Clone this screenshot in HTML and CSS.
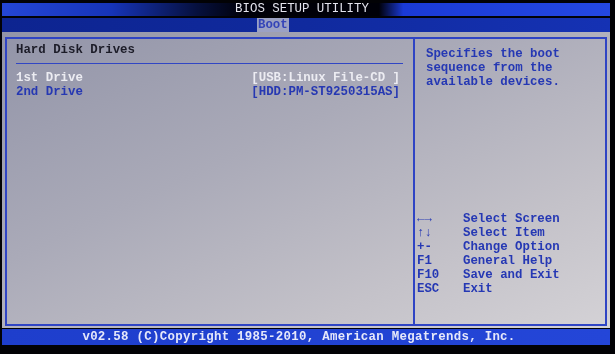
FILE: index.html
```html
<!DOCTYPE html>
<html lang="en">
<head>
  <meta charset="UTF-8">
  <title>BIOS Setup Utility - Boot</title>
  <link rel="stylesheet" href="styles.css">
</head>
<body>

<div class="screen">
  <div class="title-bar">BIOS SETUP UTILITY</div>
  <div class="tab-bar"><span class="tab active">Boot</span></div>

  <div class="main">
    <div class="frame">
      <section class="panel-left">
        <h2 class="heading">Hard Disk Drives</h2>
        <div class="rule"></div>
        <ul class="items">
          <li class="item selected"><span>1st Drive</span><span>[USB:Linux File-CD ]</span></li>
          <li class="item"><span>2nd Drive</span><span>[HDD:PM-ST9250315AS]</span></li>
        </ul>
      </section>

      <aside class="panel-help">
        <p class="help">Specifies the boot<br>sequence from the<br>available devices.</p>
        <dl class="keys">
          <dt>&larr;&rarr;</dt><dd>Select Screen</dd>
          <dt>&uarr;&darr;</dt><dd>Select Item</dd>
          <dt>+-</dt><dd>Change Option</dd>
          <dt>F1</dt><dd>General Help</dd>
          <dt>F10</dt><dd>Save and Exit</dd>
          <dt>ESC</dt><dd>Exit</dd>
        </dl>
      </aside>
    </div>
  </div>

  <div class="footer">v02.58 (C)Copyright 1985-2010, American Megatrends, Inc.</div>
</div>

</body>
</html>
```

FILE: styles.css
```css
html, body {
  margin: 0;
  background-color: #020205;
}
body {
  font-family: 'Liberation Mono', 'DejaVu Sans Mono', monospace;
  font-size: 12.4px;
  line-height: 14px;
  font-weight: bold;
}
.screen {
  width: 608px;
  height: 354px;
  margin-left: 2px;
  padding: 3px 0 9px;
  box-sizing: border-box;
  display: flex;
  flex-direction: column;
  filter: blur(0.35px);
}
.title-bar {
  height: 13px;
  line-height: 13px;
  padding-right: 8px;
  text-align: center;
  font-weight: normal;
  color: #e4e4ee;
  background: linear-gradient(90deg, #2446d6 0%, #1634b8 18%, #06103e 32%, #000008 40%, #000008 62%, #1a3ad6 66%, #2448e2 100%);
}
.tab-bar {
  height: 14px;
  margin-top: 2px;
  padding-left: 255px;
  background: linear-gradient(90deg, #0d2490 0%, #102a9e 50%, #1532b4 100%);
}
.tab {
  display: inline-block;
  height: 14px;
  padding: 0 1px;
  line-height: 14px;
}
.tab.active {
  background-color: #9ba1c4;
  color: #3444b8;
}
.main {
  flex: 1;
  padding: 5px 3px 2px 3px;
  background: linear-gradient(155deg, #9294a8 0%, #aaaab8 40%, #c4c2c9 75%, #d4d2d6 100%);
}
.frame {
  height: 100%;
  box-sizing: border-box;
  border: 2px solid #2f44c4;
  display: flex;
}
.panel-left {
  flex: 0 0 406px;
  padding: 4px 10px 0 9px;
  box-sizing: border-box;
}
.heading {
  margin: 0;
  font-size: 12.4px;
  color: #1c1c28;
}
.rule {
  height: 1px;
  margin: 6px 0 7px;
  background-color: #3146c4;
}
.items {
  list-style: none;
  margin: 0;
  padding: 0 3px 0 0;
}
.item {
  display: flex;
  justify-content: space-between;
  color: #2638b2;
}
.item.selected {
  color: #ececf2;
}
.panel-help {
  flex: 1;
  border-left: 2px solid #2f44c4;
  padding: 8px 0 28px 2px;
  display: flex;
  flex-direction: column;
  color: #2538b4;
}
.help {
  margin: 0;
  padding-left: 9px;
}
.keys {
  margin: auto 0 0 0;
  display: grid;
  grid-template-columns: 46px 1fr;
}
.keys dt, .keys dd {
  margin: 0;
}
.footer {
  height: 16px;
  line-height: 16px;
  margin-top: 1px;
  padding-right: 14px;
  text-align: center;
  letter-spacing: 0.3px;
  color: #e6e8fa;
  background: linear-gradient(90deg, #1e3ecc 0%, #2142d2 50%, #2446d8 100%);
}
```
